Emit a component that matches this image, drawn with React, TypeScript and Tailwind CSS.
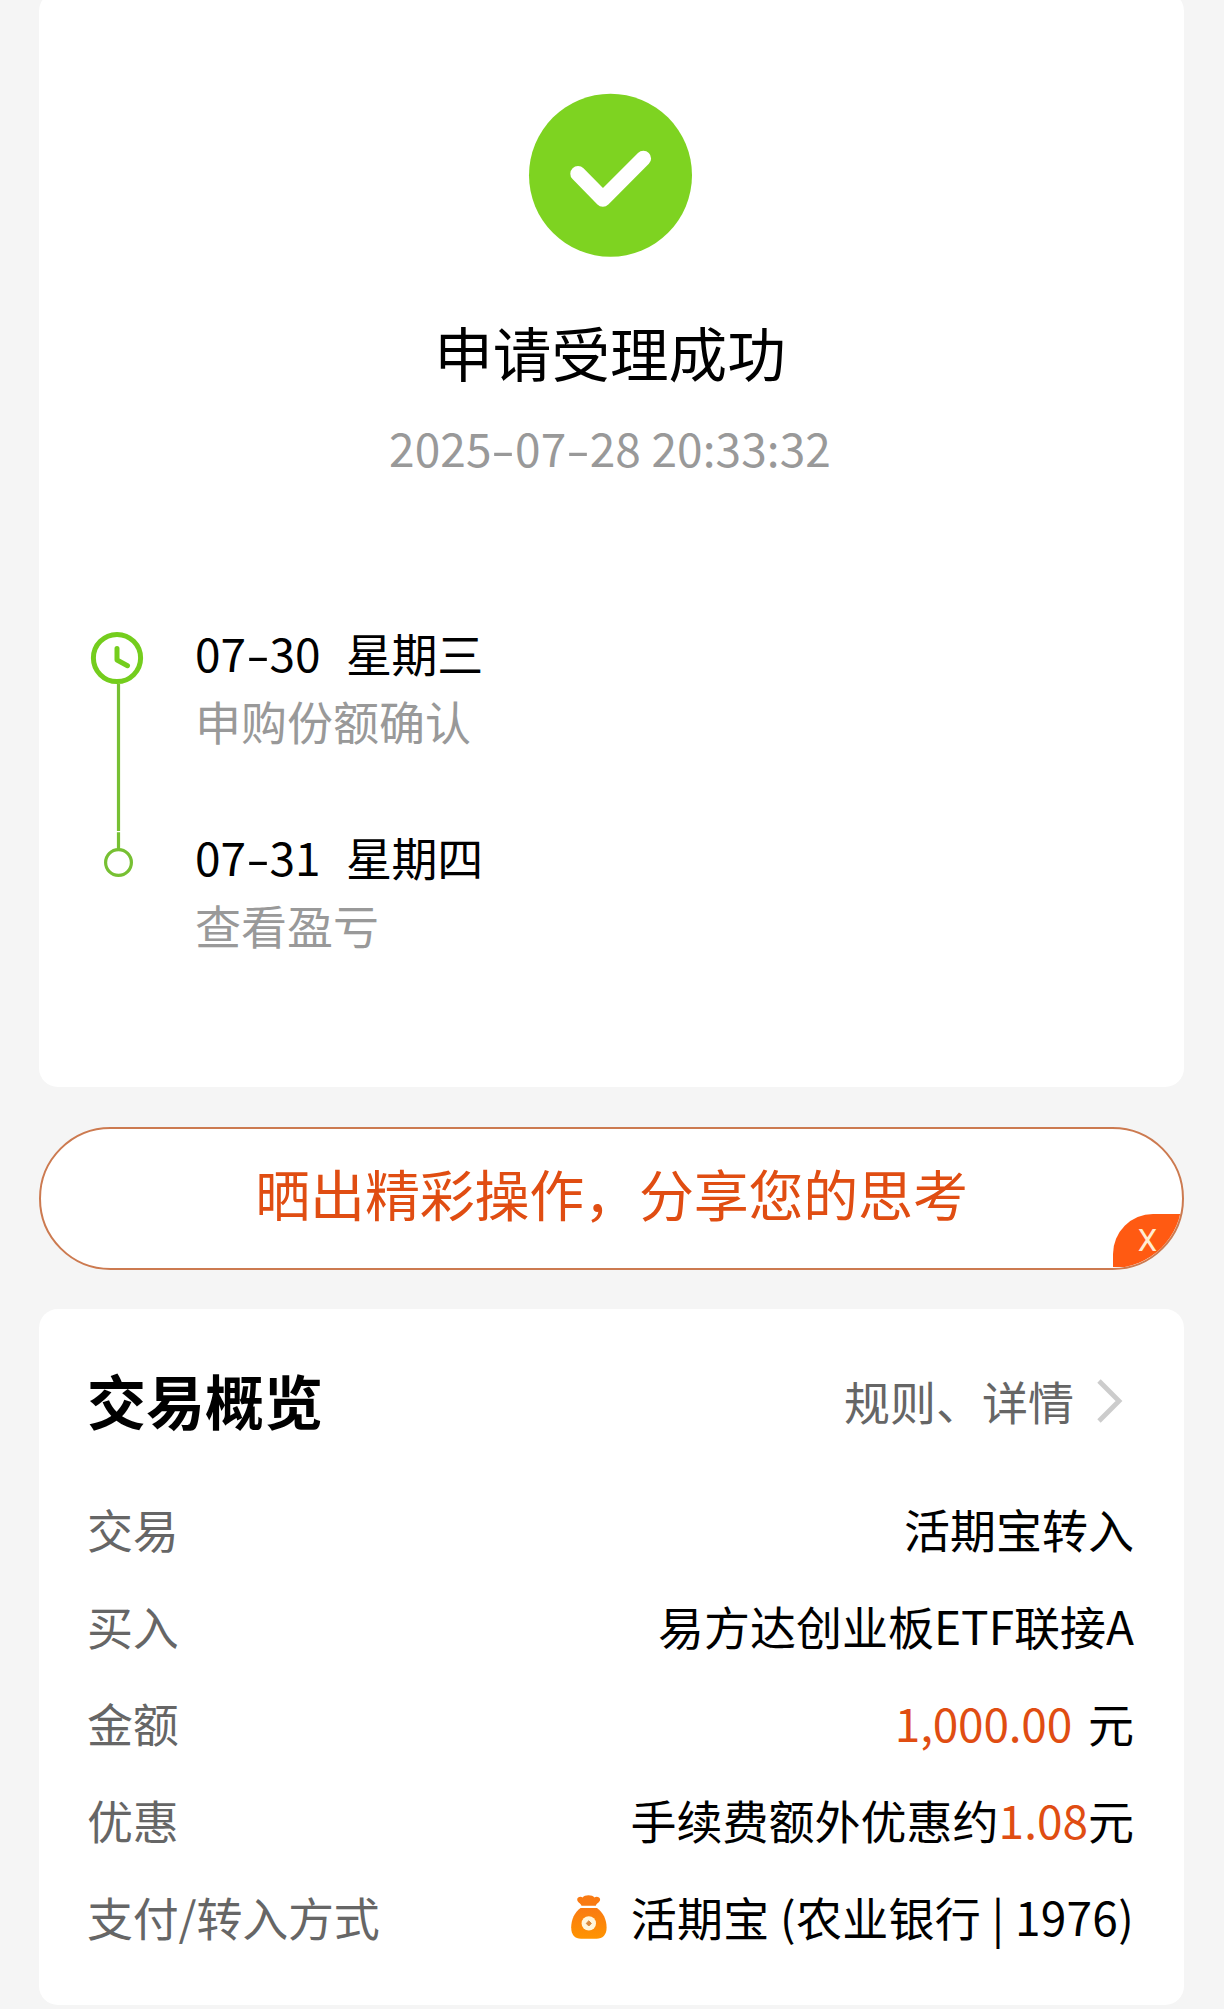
import type { ReactNode } from "react";

function Dash() {
  return <span className="mx-[3.7px] inline-block scale-x-[1.5]">-</span>;
}

function CheckBadge() {
  return (
    <svg className="block h-[164px] w-[164px]" viewBox="0 0 164 164" fill="none">
      <circle cx="82.5" cy="82.2" r="81.5" fill="#7ed321" />
      <path
        d="M50 80.7 74.9 106 115.4 65.4"
        stroke="#fff"
        strokeWidth="15.4"
        strokeLinecap="round"
        strokeLinejoin="round"
      />
    </svg>
  );
}

function TimelineRail() {
  return (
    <svg className="block h-[250px] w-[56px] shrink-0" viewBox="0 0 56 250" fill="none">
      <circle cx="28" cy="28" r="23.6" stroke="#74cd1d" strokeWidth="5" />
      <path
        d="M28 18.5V30l10.5 5.7"
        stroke="#74cd1d"
        strokeWidth="5"
        strokeLinecap="round"
        strokeLinejoin="round"
      />
      <path d="M29.5 54V201M29.5 202.3V219" stroke="#77c033" strokeWidth="3.2" />
      <circle cx="29.5" cy="232.5" r="12.9" stroke="#77c033" strokeWidth="3.2" />
    </svg>
  );
}

function MoneyBag() {
  return (
    <svg className="block h-[44px] w-[36px]" viewBox="0 0 36 44">
      <defs>
        <linearGradient id="bag" x1="0" y1="0" x2="0" y2="1">
          <stop offset="0" stopColor="#f97a12" />
          <stop offset="1" stopColor="#ff9400" />
        </linearGradient>
      </defs>
      <path
        d="M10.5 10.8C9.6 8.4 6.2 7.2 6.2 4.6 6.2 1.8 9.8 1.1 11.6 2.5 13.5-.6 21.5-.6 23.4 2.5 25.2 1.1 29.1 1.8 29.1 4.6 29.1 7.2 25.6 8.4 24.8 10.8Z"
        fill="#f97a12"
      />
      <path
        d="M9.5 13H26C32 17 35.6 24.8 35.6 32.5 35.6 40 31.5 43.8 25.5 43.8H10C4 43.8.2 40 .2 32.5.2 24.8 3.6 17 9.5 13Z"
        fill="url(#bag)"
      />
      <circle cx="17.8" cy="28.4" r="7.2" fill="#fff6dc" />
      <path d="M17.8 25.8 20.4 28.4 17.8 31 15.2 28.4Z" fill="#d98a3c" stroke="#d98a3c" strokeLinejoin="round" />
    </svg>
  );
}

function Step({ date, day, note }: { date: ReactNode; day: string; note: string }) {
  return (
    <div className="h-[204px]">
      <div className="flex h-[68px] items-center text-black">
        <span className="w-[151px]">{date}</span>
        <span className="tracking-[-0.4px]">{day}</span>
      </div>
      <div className="flex h-[68px] items-center text-[#999]">{note}</div>
    </div>
  );
}

function Row({ label, children }: { label: string; children: ReactNode }) {
  return (
    <div className="flex h-[97.2px] items-center justify-between">
      <span className="tracking-[-0.2px] text-[#666]">{label}</span>
      <div className="flex items-center text-black">{children}</div>
    </div>
  );
}

export default function App() {
  return (
    <div className="flex h-[2009px] w-[1224px] flex-col overflow-hidden bg-[#f5f5f5] px-[39px] font-['Noto_Sans_CJK_SC',sans-serif] text-[46px] leading-[68px] whitespace-nowrap">
      <section className="-mt-2 h-[1095px] w-[1145px] shrink-0 rounded-[19px] bg-white pt-[101px]">
        <div className="flex flex-col items-center pr-[3px]">
          <CheckBadge />
          <h1 className="mt-[52px] text-[58.6px] leading-[86px] text-black">申请受理成功</h1>
          <p className="mt-[18px] tracking-[0.1px] text-[#999]">
            2025
            <Dash />
            07
            <Dash />
            28 20:33:32
          </p>
        </div>
        <div className="mt-[137px] flex pl-[50px]">
          <div className="pt-[12px]">
            <TimelineRail />
          </div>
          <div className="pl-[50px]">
            <Step date={<>07<Dash />30</>} day="星期三" note="申购份额确认" />
            <Step date={<>07<Dash />31</>} day="星期四" note="查看盈亏" />
          </div>
        </div>
      </section>

      <section className="relative mt-10 flex h-[143px] w-[1145px] shrink-0 items-center justify-center overflow-hidden rounded-full border-2 border-[#cc7a50] bg-white pb-[13px]">
        <span className="text-[55px] leading-[80px] tracking-[-0.2px] text-[#e04d12]">晒出精彩操作，分享您的思考</span>
        <button className="absolute right-0 bottom-px flex h-[53px] w-[69px] items-center justify-center rounded-tl-[40px] bg-[#ff5a12] font-[Roboto] text-[31px] leading-none text-[#ffecd2]">
          X
        </button>
      </section>

      <section className="mt-[39px] h-[696px] w-[1145px] shrink-0 rounded-[19px] bg-white pt-[48px] pr-[50px] pl-[48px]">
        <div className="flex h-[86px] items-center justify-between">
          <h2 className="text-[59px] leading-[86px] font-bold text-black">交易概览</h2>
          <div className="flex items-center text-[#666]">
            规则、详情
            <svg className="mr-[10px] ml-[22px] block h-[46px] w-[28px]" viewBox="0 0 28 46" fill="none">
              <path d="M3 4 23 24 3 44" stroke="#ccc" strokeWidth="4.8" />
            </svg>
          </div>
        </div>
        <div className="mt-[36px]">
          <Row label="交易">活期宝转入</Row>
          <Row label="买入">易方达创业板ETF联接A</Row>
          <Row label="金额">
            <span className="mr-[16px] tracking-[-0.2px] text-[#e04d12]">1,000.00</span>元
          </Row>
          <Row label="优惠">
            手续费额外优惠约<span className="text-[#e04d12]">1.08</span>元
          </Row>
          <Row label="支付/转入方式">
            <span className="mt-[2px] mr-[24px]">
              <MoneyBag />
            </span>
            <span className="tracking-[0.28px]">活期宝 (农业银行 | 1976)</span>
          </Row>
        </div>
      </section>
    </div>
  );
}
